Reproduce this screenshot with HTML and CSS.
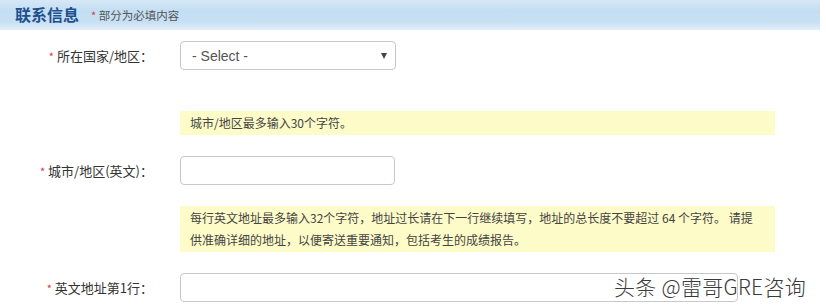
FILE: index.html
```html
<!DOCTYPE html>
<html lang="zh-CN">
<head>
    <meta charset="UTF-8">
    <title>联系信息</title>
    <link rel="stylesheet" href="styles.css">
</head>
<body>
    <div class="page">
        <!-- === HEADER === -->
        <header class="section-head">
            <h2 class="section-title">联系信息</h2>
            <span class="section-note"><span class="req">*</span> 部分为必填内容</span>
        </header>

        <!-- === FORM === -->
        <form class="form">
            <div class="form-row form-row-spaced">
                <label class="form-label"><span class="req">*</span> 所在国家/地区：</label>
                <div class="select">
                    <span>- Select -</span>
                    <span class="select-arrow"></span>
                </div>
            </div>

            <p class="tip">城市/地区最多输入30个字符。</p>
            <div class="form-row">
                <label class="form-label"><span class="req">*</span> 城市/地区(英文)：</label>
                <input class="input" type="text">
            </div>

            <p class="tip">每行英文地址最多输入32个字符，地址过长请在下一行继续填写，地址的总长度不要超过 64 个字符。 请提供准确详细的地址，以便寄送重要通知，包括考生的成绩报告。</p>
            <div class="form-row">
                <label class="form-label"><span class="req">*</span> 英文地址第1行：</label>
                <input class="input input-wide" type="text">
            </div>
        </form>

        <div class="watermark">头条 @雷哥GRE咨询</div>
    </div>
</body>
</html>
```

FILE: styles.css
```css
/* === BASE === */
* {
    margin: 0;
    padding: 0;
    box-sizing: border-box;
}

body {
    font-family: "Liberation Sans", "Noto Sans CJK SC", sans-serif;
    background: #fff;
    color: #333;
    font-size: 13px;
    overflow: hidden;
}

.page {
    position: relative;
    width: 826px;
    height: 305px;
}

.req {
    color: #e0343c;
    font-size: 11px;
}

/* === HEADER === */
.section-head {
    width: 820px;
    height: 30px;
    display: flex;
    align-items: center;
    gap: 12px;
    padding-left: 15px;
    background: linear-gradient(#d6e8f7 0%, #c3def3 35%, #c8e0f4 75%, #e3effa 100%);
}

.section-title {
    font-family: "Noto Sans CJK SC", sans-serif;
    font-size: 16px;
    font-weight: bold;
    color: #1e4f8e;
    margin-top: -2px;
}

.section-note {
    font-family: "Noto Sans CJK SC", sans-serif;
    font-size: 11.5px;
    color: #555;
}

/* === FORM === */
.form {
    padding-top: 11px;
}

.form-row {
    display: flex;
    align-items: center;
    gap: 27px;
    margin-bottom: 21px;
}

.form-row-spaced {
    margin-bottom: 41px;
}

.form-label {
    width: 153px;
    text-align: right;
    font-family: "Noto Sans CJK SC", sans-serif;
    font-size: 13px;
    color: #333;
    white-space: nowrap;
}

.select {
    width: 216px;
    height: 29px;
    display: flex;
    align-items: center;
    justify-content: space-between;
    padding: 0 8px 0 11px;
    border: 1px solid #c8c8c8;
    border-radius: 4px;
    font-size: 14px;
    color: #555;
}

.select-arrow {
    width: 0;
    height: 0;
    border-left: 3px solid transparent;
    border-right: 3px solid transparent;
    border-top: 6px solid #444;
}

.input {
    width: 215px;
    height: 29px;
    border: 1px solid #c8c8c8;
    border-radius: 4px;
    background: #fff;
}

.input-wide {
    width: 558px;
}

.tip {
    width: 595px;
    margin: 0 0 21px 180px;
    padding: 1px 12px 1px 10px;
    background: #fdfbc8;
    font-family: "Noto Sans CJK SC", sans-serif;
    font-size: 12px;
    line-height: 22px;
    color: #444;
}

/* === WATERMARK === */
.watermark {
    position: absolute;
    left: 614px;
    top: 271px;
    font-family: "Noto Sans CJK SC", sans-serif;
    font-size: 21px;
    font-weight: 300;
    letter-spacing: 0.3px;
    color: #3a3a3a;
    text-shadow: 0 0 2px #fff, 0 0 2px #fff;
    white-space: nowrap;
}
```
